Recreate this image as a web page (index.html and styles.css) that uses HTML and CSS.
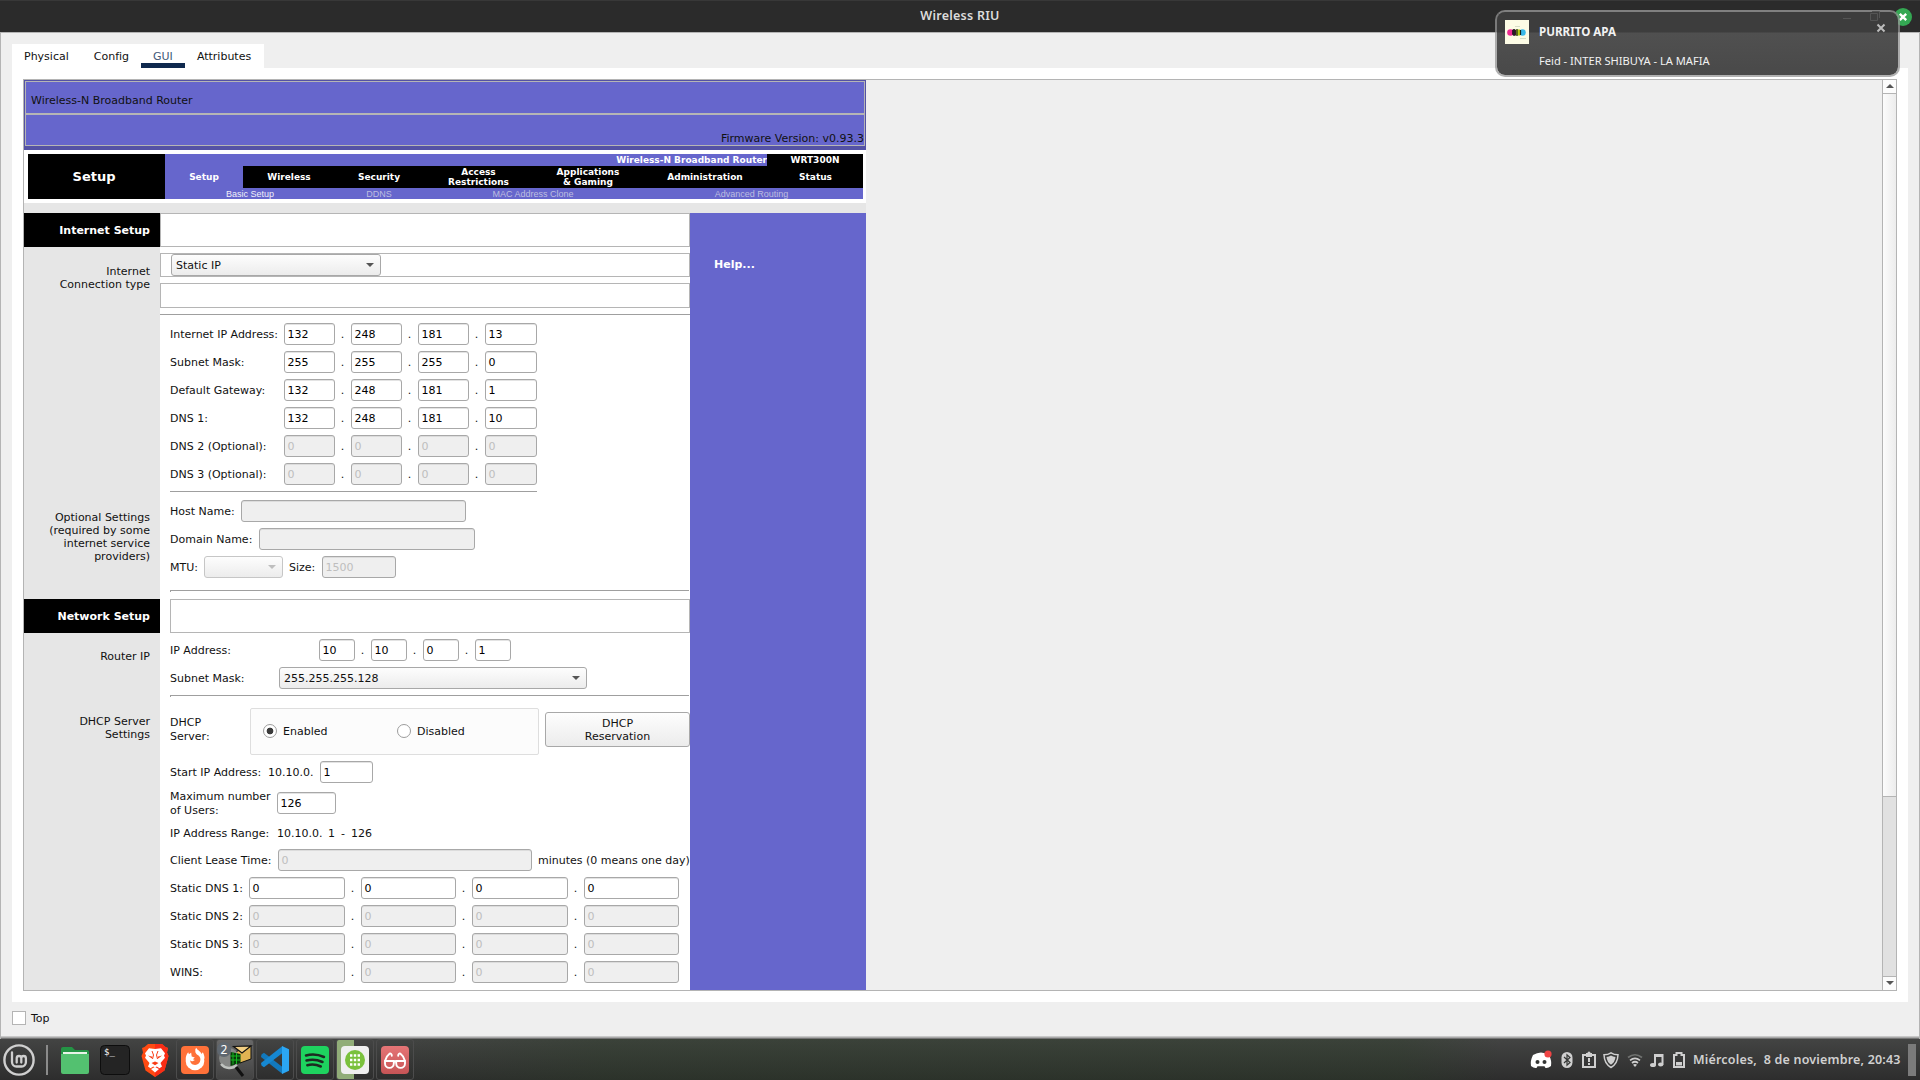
FILE: index.html
```html
<!DOCTYPE html>
<html lang="es">
<head>
<meta charset="utf-8">
<title>Wireless RIU</title>
<link rel="stylesheet" href="styles.css">
</head>
<body>
<div class="desktop">
  <header class="titlebar">
    <h1 class="title">Wireless RIU</h1>
    <svg class="close-window" viewBox="0 0 18 18"><circle cx="9" cy="9" r="9" fill="#34a853"/><path d="M5.8 5.8l6.4 6.4M12.2 5.8l-6.4 6.4" stroke="#fff" stroke-width="2.4"/></svg>
  </header>

  <main class="window">
    <nav class="tabs">
      <span class="tab">Physical</span><span class="tab">Config</span><span class="tab active">GUI</span><span class="tab">Attributes</span>
    </nav>
    <section class="panel">
      <div class="frame">
        <div class="page">
          <div class="banner">
            <div class="banner-row">Wireless-N Broadband Router</div>
            <div class="banner-row version">Firmware Version: v0.93.3</div>
          </div>
          <div class="menu">
            <div class="menu-title">Setup</div>
            <div class="menu-body">
              <div class="model"><span class="model-name">Wireless-N Broadband Router</span><span class="model-code">WRT300N</span></div>
              <div class="menu-tabs">
                <span class="current">Setup</span><span>Wireless</span><span>Security</span><span>Access<br>Restrictions</span><span>Applications<br>&amp; Gaming</span><span>Administration</span><span>Status</span>
              </div>
              <div class="submenu"><span class="current">Basic Setup</span><span>DDNS</span><span>MAC Address Clone</span><span>Advanced Routing</span></div>
            </div>
          </div>
          <div class="columns">
            <aside class="side">
              <div class="section-title">Internet Setup</div>
              <div class="side-label connection">Internet<br>Connection type</div>
              <div class="side-label optional">Optional Settings<br>(required by some<br>internet service<br>providers)</div>
              <div class="section-title">Network Setup</div>
              <div class="side-label router">Router IP</div>
              <div class="side-label dhcp">DHCP Server<br>Settings</div>
            </aside>

            <div class="form">
              <div class="box box-title"></div>
              <div class="box box-type"><div class="combo w210"><span>Static IP</span><i class="arrow"></i></div></div>
              <div class="box box-empty"></div>
              <div class="rule full"></div>

              <div class="inner">
                <div class="row"><span class="label w114">Internet IP Address:</span><span class="field w51">132</span><b class="dot">.</b><span class="field w51">248</span><b class="dot">.</b><span class="field w51">181</span><b class="dot">.</b><span class="field w52">13</span></div>
                <div class="row"><span class="label w114">Subnet Mask:</span><span class="field w51">255</span><b class="dot">.</b><span class="field w51">255</span><b class="dot">.</b><span class="field w51">255</span><b class="dot">.</b><span class="field w52">0</span></div>
                <div class="row"><span class="label w114">Default Gateway:</span><span class="field w51">132</span><b class="dot">.</b><span class="field w51">248</span><b class="dot">.</b><span class="field w51">181</span><b class="dot">.</b><span class="field w52">1</span></div>
                <div class="row"><span class="label w114">DNS 1:</span><span class="field w51">132</span><b class="dot">.</b><span class="field w51">248</span><b class="dot">.</b><span class="field w51">181</span><b class="dot">.</b><span class="field w52">10</span></div>
                <div class="row"><span class="label w114">DNS 2 (Optional):</span><span class="field off w51">0</span><b class="dot">.</b><span class="field off w51">0</span><b class="dot">.</b><span class="field off w51">0</span><b class="dot">.</b><span class="field off w52">0</span></div>
                <div class="row"><span class="label w114">DNS 3 (Optional):</span><span class="field off w51">0</span><b class="dot">.</b><span class="field off w51">0</span><b class="dot">.</b><span class="field off w51">0</span><b class="dot">.</b><span class="field off w52">0</span></div>
                <div class="rule short"></div>
                <div class="row"><span class="label w71">Host Name:</span><span class="field off w225"></span></div>
                <div class="row"><span class="label w89">Domain Name:</span><span class="field off w216"></span></div>
                <div class="row"><span class="label w34">MTU:</span><div class="combo off w79"><span></span><i class="arrow"></i></div><span class="label size">Size:</span><span class="field off w74">1500</span></div>
                <div class="rule notch after-mtu"></div>

                <div class="box box-network"></div>
                <div class="row"><span class="label w149">IP Address:</span><span class="field w36">10</span><b class="dot">.</b><span class="field w36">10</span><b class="dot">.</b><span class="field w36">0</span><b class="dot">.</b><span class="field w36">1</span></div>
                <div class="row"><span class="label w109">Subnet Mask:</span><div class="combo w308"><span>255.255.255.128</span><i class="arrow"></i></div></div>
                <div class="rule notch"></div>

                <div class="dhcp-row">
                  <span class="label w80 two dhcp-label">DHCP<br>Server:</span>
                  <div class="choices">
                    <span class="choice"><i class="radio on"></i>Enabled</span>
                    <span class="choice"><i class="radio"></i>Disabled</span>
                  </div>
                  <div class="button">DHCP<br>Reservation</div>
                </div>
                <div class="row start"><span class="label w98">Start IP Address:</span><span class="label w52">10.10.0.</span><span class="field w53">1</span></div>
                <div class="row users"><span class="label two w107">Maximum number<br>of Users:</span><span class="field w59">126</span></div>
                <div class="range"><span class="label w107">IP Address Range:</span><span class="w51">10.10.0.</span><span class="w13">1</span><span class="w10">-</span><span>126</span></div>
                <div class="row"><span class="label w108">Client Lease Time:</span><span class="field off w254">0</span><span class="label minutes">minutes (0 means one day)</span></div>
                <div class="row"><span class="label w79">Static DNS 1:</span><span class="field w96">0</span><b class="dot">.</b><span class="field w95">0</span><b class="dot">.</b><span class="field w96">0</span><b class="dot">.</b><span class="field w95">0</span></div>
                <div class="row"><span class="label w79">Static DNS 2:</span><span class="field off w96">0</span><b class="dot">.</b><span class="field off w95">0</span><b class="dot">.</b><span class="field off w96">0</span><b class="dot">.</b><span class="field off w95">0</span></div>
                <div class="row"><span class="label w79">Static DNS 3:</span><span class="field off w96">0</span><b class="dot">.</b><span class="field off w95">0</span><b class="dot">.</b><span class="field off w96">0</span><b class="dot">.</b><span class="field off w95">0</span></div>
                <div class="row"><span class="label w79">WINS:</span><span class="field off w96">0</span><b class="dot">.</b><span class="field off w95">0</span><b class="dot">.</b><span class="field off w96">0</span><b class="dot">.</b><span class="field off w95">0</span></div>
              </div>
            </div>

            <aside class="help">Help...</aside>
          </div>
        </div>
        <div class="scrollbar">
          <div class="step"><i class="arrow up"></i></div>
          <div class="thumb"></div>
          <div class="trough"></div>
          <div class="step down"><i class="arrow"></i></div>
        </div>
      </div>
    </section>
    <footer class="window-foot"><i class="checkbox"></i><span>Top</span></footer>
  </main>

  <div class="taskbar">
    <div class="launchers">
      <svg class="mint" viewBox="0 0 32 32" fill="none" stroke="#cfcfcf"><circle cx="16" cy="16" r="14.6" stroke-width="2.4"/><path d="M9 8.500v9.500a4.500 4.500 0 0 0 4.500 4.500h5.200a4.200 4.200 0 0 0 4.200-4.200v-4a2.300 2.300 0 0 0-4.600 0v4.200M18.300 18.500v-4.200a2.300 2.300 0 0 0-4.600 0v4.200" stroke-width="2.300" stroke-linecap="round"/></svg>
      <i class="divider"></i>
      <div class="task"><svg viewBox="0 0 40 40"><path d="M6 9a2 2 0 0 1 2-2h9l3 3h12a2 2 0 0 1 2 2v12H6z" fill="#249445"/><path d="M8 12h24v5H8z" fill="#e8f3e8"/><path d="M6 14h28v18a2 2 0 0 1-2 2H8a2 2 0 0 1-2-2z" fill="#53c170"/></svg></div>
      <div class="task"><svg viewBox="0 0 40 40"><rect x="5.500" y="5.500" width="29" height="29" rx="4" fill="#242424" stroke="#0d0d0d"/></svg><span class="prompt">$_</span></div>
      <div class="task"><svg viewBox="0 0 40 40"><path d="M13 4h14l3.500 3 2.500 1-1 4.500 1.500 3.500-4 14.500L20 37l-9.500-6.500L6.500 16 8 12.500 7 8l2.500-1z" fill="#ff4a12"/><path d="M20 4h7l3.500 3 2.500 1-1 4.500 1.500 3.500-4 14.500L20 37z" fill="#f92d16"/><path d="M20 9l6-.7 4 5-1 2.500 1 2-4.500 5.200 1.500 3.500-2.500 1.700-2.800-1.700-1.700 1.200-1.700-1.200-2.800 1.700-2.500-1.700 1.500-3.500L10 17.800l1-2-1-2.500 4-5z" fill="#fff"/><path d="M13 15.500l4.500 1.200-.8 1.800zM27 15.500l-4.500 1.200.8 1.800zM16.500 23l3.500-1.500 3.500 1.500-3.500 2.200z" fill="#f93c14"/><path d="M17 11l1.500 4-1 4M23 11l-1.500 4 1 4" stroke="#f93c14" fill="none"/><path d="M16 29l4-2 4 2-4 3.500z" fill="#fff"/></svg></div>
      <div class="task open"><svg viewBox="0 0 40 40"><rect x="6" y="6" width="28" height="28" rx="4" fill="#ff7139"/><circle cx="20" cy="21" r="9.300" fill="#fff"/><path d="M20.500 13c-.8-2.200-.3-4 .8-5.300 1 2.600 4.500 3.300 5.200 6.300l1.300-1.800c1.200 2 1.800 4.200 1.700 6.500l-3-1zM10.700 19.500c0-3 .9-5.300 2.500-7.200l1 2.500 3 .2z" fill="#fff"/><path d="M16 11.500l4.200-1.500c-.2 2 .5 3.300 1.700 4.500 2.500 1.200 3.700 3 3.500 5.300-.3 3.300-2.400 5.200-5.300 5.200-3 0-5-2.100-4.900-4.700.8.900 1.800 1.100 2.900.7l1.800-1-2-.7 1.900-1.800-3.100-1z" fill="#ff7139"/></svg></div>
      <div class="task open focus"><svg viewBox="0 0 40 40"><path d="M20 12l16-6v13l-11 4z" fill="#e0b352" stroke="#111"/><path d="M18.500 6.500L27 13l9-7z" fill="#f2cf83" stroke="#111" stroke-width="1.200"/><circle cx="14" cy="18" r="10" fill="#858785"/><path d="M15.500 12l10 2v9l-10 3z" fill="#063b08"/><path d="M18 12.500v12M21.500 13v11M15.500 16h10M15.500 20h10" stroke="#16b822"/><path d="M6 24a11 11 0 0 0 16 1" stroke="#bfc3bf" stroke-width="2.500" fill="none"/><path d="M21 27l7 9" stroke="#111" stroke-width="3"/></svg><span class="count">2</span></div>
      <div class="task open"><svg viewBox="0 0 40 40"><path d="M6.500 14.500L9 12.700 27.500 27v7L6 17z" fill="#1279bd"/><path d="M6.500 25.500L9 27.300 27.500 13V6L6 23z" fill="#1688d2"/><path d="M27 6l7 3.200v21.600L27 34z" fill="#2ba6f3"/></svg></div>
      <div class="task open"><svg viewBox="0 0 40 40"><rect x="6" y="6" width="28" height="28" rx="4" fill="#1ed35f"/><path d="M11 15.500c6-1.700 12.500-1 18 1.500M11.500 20.500c5.500-1.500 11-.8 16 1.500M12.300 25.200c4.500-1.200 9.300-.7 13.500 1.300" stroke="#1d2a21" stroke-width="2.500" stroke-linecap="round" fill="none"/></svg></div>
      <div class="task open progress"><svg viewBox="0 0 40 40"><rect x="6" y="6" width="28" height="28" rx="4" fill="#efefef"/><circle cx="20" cy="20" r="10" fill="#7ac13c"/><path d="M15 15.500h10M15 20h10M15 24.500h10" stroke="#fff" stroke-width="2.400" stroke-dasharray="2.400 1.400"/></svg></div>
      <div class="task open"><svg viewBox="0 0 40 40"><defs><linearGradient id="rose" x2="0" y2="1"><stop stop-color="#e57576"/><stop offset="1" stop-color="#c65456"/></linearGradient></defs><rect x="6" y="6" width="28" height="28" rx="4" fill="url(#rose)"/><g fill="none" stroke="#fff" stroke-width="1.900" stroke-linecap="round"><path d="M10 21h8.800v2.500a4.400 4.400 0 0 1-8.800 0zM21.200 21H30v2.500a4.400 4.400 0 0 1-8.800 0zM18.800 21.500h2.400M10.200 20.500c.6-3 2.200-5.200 4.300-6.800 1.200-.6 2.300.4 2.300 2M29.800 20.500c-.6-3-2.200-5.200-4.300-6.800-1.200-.6-2.300.4-2.300 2"/></g></svg></div>
    </div>

    <div class="tray">
      <svg class="discord" viewBox="0 0 24 20"><path d="M4 5q4-2.500 8-2.500T20 5q3 6 2 11-3 2.500-5.500 2l-1-1.700h-7L7.500 18Q5 18.500 2 16 1 11 4 5z" fill="#fff"/><circle cx="8.500" cy="12" r="2" fill="#343634"/><circle cx="15.500" cy="12" r="2" fill="#343634"/><circle cx="19" cy="4" r="3.600" fill="#ef4444"/></svg>
      <svg class="bt" viewBox="0 0 12 18"><rect x="0.500" y="1" width="11" height="16" rx="5.500" fill="#cfcfcf"/><path d="M3 6l6 5.500-3 2.700V3.800l3 2.700L3 12" fill="none" stroke="#343634" stroke-width="1.200"/></svg>
      <svg class="clip" viewBox="0 0 14 18"><path d="M1 4h12v12H1z" fill="none" stroke="#cfcfcf" stroke-width="2"/><path d="M4 2h1.500a1.500 1.500 0 0 1 3 0H10v4H4zM6 7h2v4H6zM6 12h2v2H6z" fill="#cfcfcf"/></svg>
      <svg class="shield" viewBox="0 0 16 18"><path d="M8 1.800q3 2 7 2-.3 9-7 12.700Q1.300 12.800 1 3.800q4 0 7-2z" fill="none" stroke="#cfcfcf" stroke-width="1.500"/><path d="M8 4.500q2 1.200 4.500 1.400Q12 11 8 13.700 4 11 3.500 5.900 6 5.700 8 4.500z" fill="#cfcfcf"/></svg>
      <svg class="wifi" viewBox="0 0 16 14"><g fill="none" stroke="#cfcfcf" stroke-width="1.700"><path d="M1 4.500q7-5.500 14 0" stroke="#707270"/><path d="M3 7.300q5-4 10 0M5 10q3-2.500 6 0"/></g><path d="M8 14l-2-2.300q2-1.500 4 0z" fill="#cfcfcf"/></svg>
      <svg class="music" viewBox="0 0 14 14"><path d="M4 1h9.500v10.500h-2V4H6v8H4z" fill="#cfcfcf"/><ellipse cx="3" cy="12" rx="3" ry="2" fill="#cfcfcf"/><ellipse cx="10.700" cy="11.500" rx="2.700" ry="2" fill="#cfcfcf"/></svg>
      <svg class="battery" viewBox="0 0 12 18"><path d="M1 4h2.500V2h5v2H11v12H1z" fill="none" stroke="#cfcfcf" stroke-width="2"/><path d="M3 11h6v3.500H3z" fill="#cfcfcf"/></svg>
      <span class="clock">Miércoles,&nbsp; 8 de noviembre, 20:43</span>
      <i class="show-desktop"></i>
    </div>
  </div>

  <div class="notification">
    <svg class="cover" viewBox="0 0 24 24"><path d="M0 0h24v24H0z" fill="#fdfce6"/><circle cx="5.500" cy="12.500" r="3.300" fill="#f02a93"/><circle cx="17.500" cy="12.500" r="3.300" fill="#38b9ea"/><path d="M7 10l2-1 2 1v5.500H9l-2-1z" fill="#3b1531"/><path d="M11 9.500h4v6h-4z" fill="#b8cf15"/><path d="M9 9v7M12 9v7M15.500 10v5" stroke="#17251c" stroke-width="1.200"/><path d="M10 6.500h5M15 18.500h6" stroke="#d5dec6"/></svg>
    <div class="message"><strong>PURRITO APA</strong><span>Feid - INTER SHIBUYA - LA MAFIA</span></div>
    <svg class="ghost" viewBox="0 0 38 12"><path d="M0 8.500h8M27.500 3.500h7v7h-7zM29 1.500h7.500V8" fill="none" stroke="#545454"/></svg>
    <svg class="dismiss" viewBox="0 0 10 10"><path d="M1.500 1.500l7 7M8.500 1.500l-7 7" stroke="#bcbcbc" stroke-width="2"/></svg>
  </div>
</div>
</body>
</html>
```
FILE: styles.css
```css
* { box-sizing: border-box; }
body { margin: 0; }
i, b { font-style: normal; font-weight: normal; }
svg { display: block; flex: none; }

.desktop {
  position: relative;
  width: 1920px;
  height: 1080px;
  overflow: hidden;
  display: flex;
  flex-direction: column;
  background: #efefef;
  color: #111;
  font: 11px/13px "DejaVu Sans", sans-serif;
}

/* Title bar */
.titlebar {
  height: 32px;
  display: flex;
  justify-content: flex-end;
  align-items: center;
  background: #2b2b2b;
  border-top: 1px solid #383838;
  padding-right: 8px;
}
.title {
  flex: 1;
  margin: 0;
  padding: 0 0 1px 26px;
  text-align: center;
  color: #dcdcdc;
  font: 600 12.500px/30px "Noto Sans", sans-serif;
  letter-spacing: .25px;
}
.close-window { width: 18px; height: 18px; }

/* Window */
.window {
  height: 1007px;
  display: flex;
  flex-direction: column;
  border: 1px solid #b4b4b4;
  border-bottom: 0;
  padding: 11px 11px 0;
  background: linear-gradient(#c8c8c8 1px, #a8a8a8 1px, #a8a8a8 2px, #757575 2px) bottom / 100% 3px no-repeat #efefef;
}
.tabs { display: flex; width: 252px; height: 24px; background: #fff; }
.tab { padding: 6px 12px 0; border-bottom: 5px solid transparent; }
.tab:nth-child(2) { padding-left: 13px; }
.tab.active { color: #43597a; border-color: #0f294e; }
.panel { height: 934px; background: #fff; padding: 11px; }
.frame {
  height: 912px;
  display: flex;
  justify-content: space-between;
  border: 1px solid #b4b4b4;
  background: #efefef;
  overflow: hidden;
}
.page { width: 842px; }
.window-foot { display: flex; gap: 5px; padding-top: 9px; line-height: 16px; }
.checkbox { width: 14px; height: 14px; border: 1px solid #b4b4b4; background: #fff; }

/* Router banner */
.banner { height: 70px; padding: 1px 1px 4px; background: #5452a5; }
.banner-row {
  height: 33px;
  border: 1px solid #b5b5b5;
  background: #6666cc;
  padding: 12px 5px 0;
}
.banner-row.version { height: 32px; padding: 17px 0 0; text-align: right; }

/* Router menu */
.menu {
  height: 53px;
  display: flex;
  padding: 4px 3px 4px 4px;
  background: #fff;
  color: #fff;
  font-weight: bold;
}
.menu-title { width: 137px; padding-right: 5px; background: #000; text-align: center; font-size: 13px; line-height: 45px; }
.menu-body { width: 698px; background: #6666cc; font-size: 9px; line-height: 10px; }
.model { display: flex; justify-content: flex-end; height: 12px; line-height: 12px; }
.model-code { width: 96px; background: #000; text-align: center; }
.menu-tabs {
  display: grid;
  grid-template-columns: 78px 92px 88px 111px 108px 126px 95px;
  height: 22px;
  background: #000;
}
.menu-tabs span { display: flex; align-items: center; justify-content: center; text-align: center; }
.menu-tabs .current { background: #6666cc; }
.submenu {
  display: grid;
  grid-template-columns: 170px 88px 220px 217px;
  height: 11px;
  color: #bebee0;
  text-align: center;
  font: 9px/12px "Liberation Sans", sans-serif;
}
.submenu .current { color: #f0f0fa; }

.columns { display: flex; height: 787px; border-top: 10px solid #e6e6e6; }

/* Side column */
.side { width: 136px; background: #e6e6e6; text-align: right; }
.section-title {
  height: 34px;
  padding-right: 10px;
  background: #000;
  color: #fff;
  font-weight: bold;
  line-height: 35px;
}
.side-label { padding-right: 10px; }
.connection { height: 246px; padding-top: 18px; }
.optional { height: 106px; padding-top: 18px; }
.router { padding-top: 17px; height: 82px; }

/* Form */
.form { width: 530px; background: #fff; }
.box { border: 1px solid #b5b5b5; background: #fff; }
.box-title { height: 34px; }
.box-type { height: 24px; margin-top: 6px; padding-left: 10px; }
.box-empty { height: 25px; margin-top: 6px; }
.rule { height: 1px; background: #9f9f9f; }
.rule.full { margin: 6px 0 8px; }
.inner { padding-left: 10px; }
.row { display: flex; align-items: center; height: 22px; margin-bottom: 6px; white-space: nowrap; }
.label { flex: none; }
.two { line-height: 14px; }
.field {
  flex: none;
  height: 22px;
  padding-left: 2.500px;
  border: 1px solid #a8a8a8;
  border-radius: 3px;
  background: #fff;
  box-shadow: inset 0 1px #e3e3e3;
  line-height: 21px;
  color: #000;
}
.field.off { background: #efefef; color: #bebebe; box-shadow: inset 0 1px #dcdcdc; }
.dot { width: 16px; padding-right: 1px; text-align: center; }
.combo {
  flex: none;
  display: flex;
  justify-content: space-between;
  align-items: center;
  height: 22px;
  padding: 0 6px 0 4px;
  border: 1px solid #a8a8a8;
  border-radius: 3px;
  background: linear-gradient(#fdfdfd, #ececec);
}
.combo.off { border-color: #c6c6c6; }
.combo.off .arrow { border-top-color: #bebebe; }
.arrow { width: 8px; height: 4px; border: 4px solid transparent; border-top-color: #555; border-bottom: 0; }
.arrow.up { border-top: 0; border-bottom: 4px solid #555; }
.size { width: 39px; padding-left: 6px; }
.minutes { padding-left: 6px; }
.rule.short { width: 367px; margin-bottom: 8px; }
.rule.notch { width: 519px; height: 2px; background: linear-gradient(#9f9f9f 1px, transparent 1px); border-left: 1px solid #9f9f9f; }
.after-mtu { margin: 12px 0 7px; }
.box-network { height: 34px; margin-bottom: 6px; }
.dhcp-row { display: flex; align-items: center; height: 47px; margin: 11px 0 6px; }
.dhcp-label { padding-bottom: 3px; }
.choices {
  display: flex;
  align-items: center;
  width: 289px;
  height: 47px;
  padding: 0 0 1px 12px;
  border: 1px solid #dedede;
  border-radius: 2px;
  background: #fcfcfc;
}
.choice { display: flex; align-items: center; gap: 6px; width: 134px; }
.radio { width: 14px; height: 14px; border: 1px solid #9c9c9c; border-radius: 50%; background: #fff; }
.radio.on { background: radial-gradient(circle, #3b3b3b 3px, #fff 3.700px); }
.button {
  width: 145px;
  height: 35px;
  margin: 0 0 4px 6px;
  padding-top: 4px;
  border: 1px solid #a8a8a8;
  border-radius: 3px;
  background: linear-gradient(#fdfdfd, #ececec);
  text-align: center;
}
.users { margin: 9px 0 12px; }
.users .label { padding-top: 2px; }
.range { display: flex; height: 14px; padding-top: 1px; margin-bottom: 9px; }

.w10 { width: 10px; } .w13 { width: 13px; } .w34 { width: 34px; } .w36 { width: 36px; }
.w51 { width: 51px; } .w52 { width: 52px; } .w53 { width: 53px; } .w59 { width: 59px; }
.w71 { width: 71px; } .w74 { width: 74px; } .w79 { width: 79px; } .w80 { width: 80px; }
.w89 { width: 89px; } .w95 { width: 95px; } .w96 { width: 96px; } .w98 { width: 98px; }
.w107 { width: 107px; } .w108 { width: 108px; } .w109 { width: 109px; } .w114 { width: 114px; }
.w149 { width: 149px; } .w210 { width: 210px; } .w216 { width: 216px; } .w225 { width: 225px; }
.w254 { width: 254px; } .w308 { width: 308px; }

.help { width: 176px; padding: 45px 24px; background: #6666cc; color: #fff; font-weight: bold; }

/* Scrollbar */
.scrollbar { width: 14px; display: flex; flex-direction: column; border-left: 1px solid #b4b4b4; background: #e1e1e1; }
.step { height: 13px; display: flex; align-items: center; justify-content: center; padding-bottom: 1px; background: #fcfcfc; }
.thumb { height: 704px; border: solid #b4b4b4; border-width: 1px 0; background: linear-gradient(90deg, #fcfcfc, #ececec); }
.trough { flex: 1; background: #e1e1e1; }
.step.down { height: 14px; border-top: 1px solid #b4b4b4; }

/* Taskbar */
.taskbar {
  height: 41px;
  display: flex;
  justify-content: space-between;
  background: linear-gradient(90deg, transparent 380px, rgba(40, 62, 35, .3) 600px, rgba(40, 62, 35, .3) 1400px, transparent 1500px), linear-gradient(#434443, #2d2d2d);
}
.launchers { display: flex; align-items: center; }
.mint { width: 32px; height: 32px; margin-left: 3px; }
.divider { width: 2px; height: 30px; margin: 0 7px 0 11px; background: #8b8b8b; }
.task { position: relative; width: 38px; height: 41px; margin: 0 1px; display: flex; align-items: center; justify-content: center; }
.task svg { width: 40px; height: 40px; }
.open { border: 1px solid #4c4c4c; border-radius: 3px; }
.focus { background: linear-gradient(#686868, #424242); }
.progress { background: linear-gradient(90deg, #91ad78 17px, transparent 17px); }
.prompt { position: absolute; left: 8px; top: 7px; color: #fff; font: 9px/12px "DejaVu Sans Mono", monospace; }
.count { position: absolute; left: 0; top: 2px; width: 14px; border-radius: 7px; background: #5f676f; color: #fff; text-align: center; font: 12px/15px "Noto Sans", sans-serif; }
.tray { display: flex; align-items: center; }
.discord { width: 24px; height: 20px; margin-right: 8px; }
.bt { width: 12px; height: 18px; margin-right: 9px; }
.clip { width: 14px; height: 18px; margin-right: 7px; }
.shield { width: 16px; height: 18px; margin-right: 8px; }
.wifi { width: 16px; height: 14px; margin-right: 7px; }
.music { width: 14px; height: 14px; margin-right: 9px; }
.battery { width: 12px; height: 18px; margin-right: 8px; }
.clock { width: 207px; padding-top: 1px; color: #d0d0d0; font: 600 12.500px/20px "Noto Sans", sans-serif; letter-spacing: .18px; white-space: nowrap; }
.show-desktop { width: 8px; height: 32px; margin: 0 4px 0 8px; background: #7b7b7b; }

/* Notification */
.notification {
  position: absolute;
  left: 1495px;
  top: 10px;
  width: 405px;
  height: 67px;
  display: flex;
  align-items: flex-start;
  padding: 8px;
  border: 2px solid rgba(150, 150, 150, .75);
  border-top-color: #808080;
  border-radius: 10px;
  background: linear-gradient(#3d3d3d 20px, #505050 21px, #494949);
  background-clip: padding-box;
}
.cover { width: 24px; height: 24px; }
.message { display: flex; flex-direction: column; gap: 11px; margin: 3px 0 0 10px; color: #f2f2f2; font: 11.120px/18px "Noto Sans", sans-serif; white-space: nowrap; }
.message strong { font-size: 11.600px; }
.ghost { position: absolute; left: 346px; top: -2px; width: 38px; height: 12px; }
.dismiss { position: absolute; left: 379px; top: 11px; width: 10px; height: 10px; }
```
